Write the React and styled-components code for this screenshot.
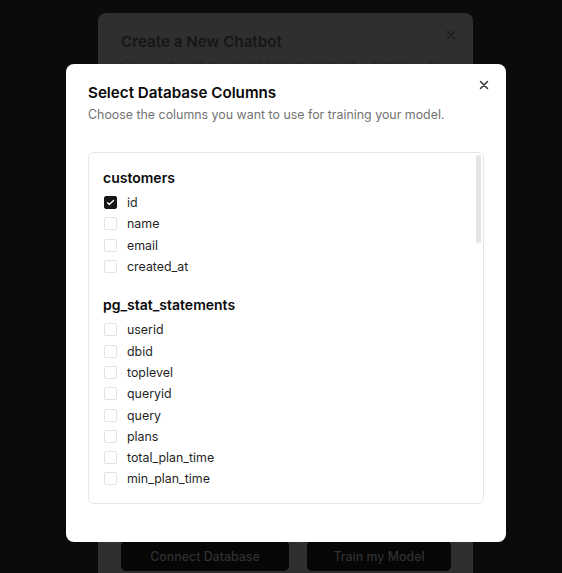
import styled, { createGlobalStyle } from 'styled-components'

const GlobalStyle = createGlobalStyle`
  html, body {
    margin: 0;
    padding: 0;
    background: #0b0b0b;
    overflow: hidden;
    font-family: Inter, "Liberation Sans", sans-serif;
  }
`

const Page = styled.div`
  width: 562px;
  height: 573px;
  position: relative;
  overflow: hidden;
  padding: 13px 0 0 98px;
  box-sizing: border-box;
`

const BackDialog = styled.div`
  width: 375px;
  height: 600px;
  background: #2f2f2f;
  border-radius: 8px;
  padding: 20px 22px 0 23px;
  box-sizing: border-box;
  display: flex;
  flex-direction: column;
  position: relative;
`

const BackTitle = styled.h2`
  margin: 0;
  font-size: 15.2px;
  line-height: 18px;
  font-weight: 600;
  color: #161616;
`

const BackText = styled.p`
  margin: 6px 0 0;
  font-size: 12.4px;
  line-height: 18px;
  color: #262626;
`

const BackActions = styled.div`
  margin-top: auto;
  margin-bottom: 42px;
  display: flex;
  gap: 18px;
`

const DarkButton = styled.button`
  width: ${(p) => p.$w}px;
  height: 30px;
  border: none;
  border-radius: 5px;
  background: #060606;
  color: #303030;
  font-family: inherit;
  font-size: 12.4px;
  font-weight: 500;
`

const CloseButton = styled.button`
  position: absolute;
  top: ${(p) => p.$top}px;
  right: ${(p) => p.$right}px;
  width: 16px;
  height: 16px;
  padding: 0;
  border: none;
  background: none;
  display: flex;
  align-items: center;
  justify-content: center;
  color: ${(p) => p.$color};
`

const Dialog = styled.div`
  position: absolute;
  left: 66px;
  top: 64px;
  width: 440px;
  height: 478px;
  background: #ffffff;
  border-radius: 8px;
  padding: 19px 22px 0 22px;
  box-sizing: border-box;
  display: flex;
  flex-direction: column;
`

const Title = styled.h2`
  margin: 0;
  font-size: 15.2px;
  line-height: 20px;
  font-weight: 600;
  color: #0a0a0a;
`

const Subtitle = styled.p`
  margin: 3px 0 0;
  font-size: 12.4px;
  line-height: 18px;
  color: #737373;
`

const ListBox = styled.div`
  margin-top: 28px;
  height: 352px;
  border: 1px solid #e6e6e6;
  border-radius: 6px;
  box-sizing: border-box;
  padding: 15px 14px 14px;
  position: relative;
  overflow: hidden;
`

const Viewport = styled.div`
  height: 100%;
  overflow: hidden;
`

const ScrollThumb = styled.div`
  position: absolute;
  top: 2px;
  right: 2px;
  width: 5px;
  height: 88px;
  border-radius: 3px;
  background: #e4e4e4;
`

const Group = styled.div`
  margin-bottom: 18px;
`

const GroupTitle = styled.h3`
  margin: 0 0 4px;
  font-size: 14px;
  line-height: 20px;
  font-weight: 600;
  color: #0a0a0a;
`

const Row = styled.label`
  display: flex;
  align-items: center;
  gap: 10px;
  height: 21.3px;
  font-size: 12.4px;
  color: #1f1f1f;
`

const Box = styled.span`
  width: 13px;
  height: 13px;
  box-sizing: border-box;
  border-radius: 2px;
  border: 1px solid ${(p) => (p.$checked ? '#171717' : '#e3e3e3')};
  background: ${(p) => (p.$checked ? '#171717' : '#fff')};
  display: flex;
  align-items: center;
  justify-content: center;
  margin-left: 1px;
`

const XIcon = ({ size = 12, width = 1.6 }) => (
  <svg width={size} height={size} viewBox="0 0 24 24" fill="none" stroke="currentColor" strokeWidth={width * 2} strokeLinecap="round">
    <path d="M5 5l14 14M19 5L5 19" />
  </svg>
)

const groups = [
  { name: 'customers', cols: ['id', 'name', 'email', 'created_at'], checked: ['id'] },
  {
    name: 'pg_stat_statements',
    cols: ['userid', 'dbid', 'toplevel', 'queryid', 'query', 'plans', 'total_plan_time', 'min_plan_time'],
    checked: [],
  },
]

export default function App() {
  return (
    <>
      <GlobalStyle />
      <Page>
        <BackDialog>
          <BackTitle>Create a New Chatbot</BackTitle>
          <BackText>Choose to either upload files or connect a database for</BackText>
          <BackActions>
            <DarkButton $w={168}>Connect Database</DarkButton>
            <DarkButton $w={144}>Train my Model</DarkButton>
          </BackActions>
          <CloseButton $top={14} $right={14} $color="#1a1a1a">
            <XIcon size={12} width={1.4} />
          </CloseButton>
        </BackDialog>

        <Dialog>
          <Title>Select Database Columns</Title>
          <Subtitle>Choose the columns you want to use for training your model.</Subtitle>
          <ListBox>
            <Viewport>
              {groups.map((g) => (
                <Group key={g.name}>
                  <GroupTitle>{g.name}</GroupTitle>
                  {g.cols.map((c) => {
                    const on = g.checked.includes(c)
                    return (
                      <Row key={c}>
                        <Box $checked={on}>
                          {on && (
                            <svg width="9" height="9" viewBox="0 0 24 24" fill="none" stroke="#fff" strokeWidth="3.5" strokeLinecap="round" strokeLinejoin="round">
                              <path d="M4 12.5l5 5L20 6.5" />
                            </svg>
                          )}
                        </Box>
                        {c}
                      </Row>
                    )
                  })}
                </Group>
              ))}
            </Viewport>
            <ScrollThumb />
          </ListBox>
          <CloseButton $top={13} $right={14} $color="#333">
            <XIcon size={12} width={1.5} />
          </CloseButton>
        </Dialog>
      </Page>
    </>
  )
}
